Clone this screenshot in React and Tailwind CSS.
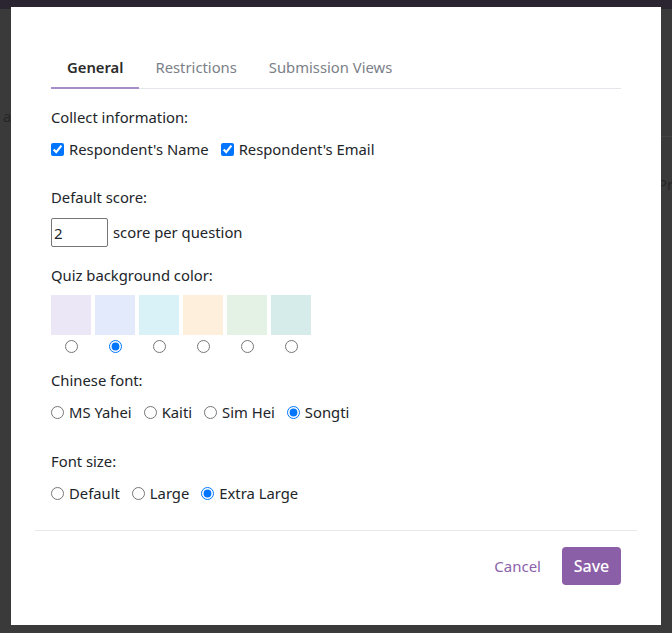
import { useState } from 'react'

const swatches = ['#ece7f6', '#e2eafb', '#d8f2f7', '#feefdc', '#e4f1e5', '#d6ecea']

export default function App() {
  const [name, setName] = useState(true)
  const [email, setEmail] = useState(true)
  const [score, setScore] = useState('2')
  const [bg, setBg] = useState(1)
  const [cnFont, setCnFont] = useState('Songti')
  const [size, setSize] = useState('Extra Large')

  return (
    <div className="relative w-[672px] h-[633px] overflow-hidden bg-[#3a3a3a] text-[14.8px] text-[#212529]" style={{ fontFamily: '"Noto Sans", "Open Sans", sans-serif' }}>
      {/* dimmed page behind the modal */}
      <div className="h-[9px] bg-[#2a2530]" />
      <div className="relative h-full">
        <span className="absolute left-[3px] top-[96px] text-[#262626]">a</span>
        <span className="absolute left-[658px] top-[164px] text-[#262626]">Pr</span>
        <div className="absolute left-[560px] right-0 top-[127px] h-px bg-[#444]" />
      </div>

      {/* modal */}
      <div className="absolute left-[11px] top-[7px] w-[650px] h-[618px] bg-white flex flex-col">
        <div className="pt-[41px] px-[40px]">
          <div className="flex border-b border-[#e3e6ea]">
            {['General', 'Restrictions', 'Submission Views'].map((t, i) => (
              <div
                key={t}
                className={i === 0
                  ? 'px-4 pt-[9px] pb-[10px] leading-5 font-semibold text-[#2b2b2b] border-b-2 border-[#a58ccb] -mb-px'
                  : 'px-4 pt-[9px] pb-[10px] leading-5 text-[#7b8088]'}
              >
                {t}
              </div>
            ))}
          </div>

          <div className="mt-[17px] leading-[22px]">Collect information:</div>
          <div className="mt-[10px] flex items-center gap-3 leading-[22px]">
            <label className="flex items-center gap-[5px]">
              <input type="checkbox" checked={name} onChange={e => setName(e.target.checked)} className="w-[13px] h-[13px] m-0 accent-[#0075ff]" />
              Respondent's Name
            </label>
            <label className="flex items-center gap-[5px]">
              <input type="checkbox" checked={email} onChange={e => setEmail(e.target.checked)} className="w-[13px] h-[13px] m-0 accent-[#0075ff]" />
              Respondent's Email
            </label>
          </div>

          <div className="mt-[26px] leading-[22px]">Default score:</div>
          <div className="mt-[10px] flex items-center gap-[5px]">
            <input
              value={score}
              onChange={e => setScore(e.target.value)}
              className="w-[57px] h-[29px] border border-[#767676] rounded-[2px] px-[2px] outline-none text-[15px]"
            />
            <span>score per question</span>
          </div>

          <div className="mt-[17px] leading-[22px]">Quiz background color:</div>
          <div className="mt-[9px] flex gap-1">
            {swatches.map((c, i) => (
              <div key={c} className="flex flex-col items-center w-[40px]">
                <div className="w-[40px] h-[40px]" style={{ background: c }} />
                <input type="radio" name="bg" checked={bg === i} onChange={() => setBg(i)} className="mt-[5px] w-[13px] h-[13px] m-0 accent-[#0075ff]" />
              </div>
            ))}
          </div>

          <div className="mt-[16px] leading-[22px]">Chinese font:</div>
          <div className="mt-[10px] flex items-center gap-3 leading-[22px]">
            {['MS Yahei', 'Kaiti', 'Sim Hei', 'Songti'].map(f => (
              <label key={f} className="flex items-center gap-[5px]">
                <input type="radio" name="cn" checked={cnFont === f} onChange={() => setCnFont(f)} className="w-[13px] h-[13px] m-0 accent-[#0075ff]" />
                {f}
              </label>
            ))}
          </div>

          <div className="mt-[27px] leading-[22px]">Font size:</div>
          <div className="mt-[10px] flex items-center gap-3 leading-[22px]">
            {['Default', 'Large', 'Extra Large'].map(f => (
              <label key={f} className="flex items-center gap-[5px]">
                <input type="radio" name="fs" checked={size === f} onChange={() => setSize(f)} className="w-[13px] h-[13px] m-0 accent-[#0075ff]" />
                {f}
              </label>
            ))}
          </div>
        </div>

        <div className="mt-[26px] mx-6 border-t border-[#e6e9ec]" />
        <div className="flex justify-end items-center gap-[21px] px-[40px] mt-[16px]">
          <button className="text-[#8c62a9] text-[15px]">Cancel</button>
          <button className="bg-[#8b5ea8] text-white rounded-[4px] w-[59px] h-[38px] text-[16px] font-medium">Save</button>
        </div>
      </div>
    </div>
  )
}
